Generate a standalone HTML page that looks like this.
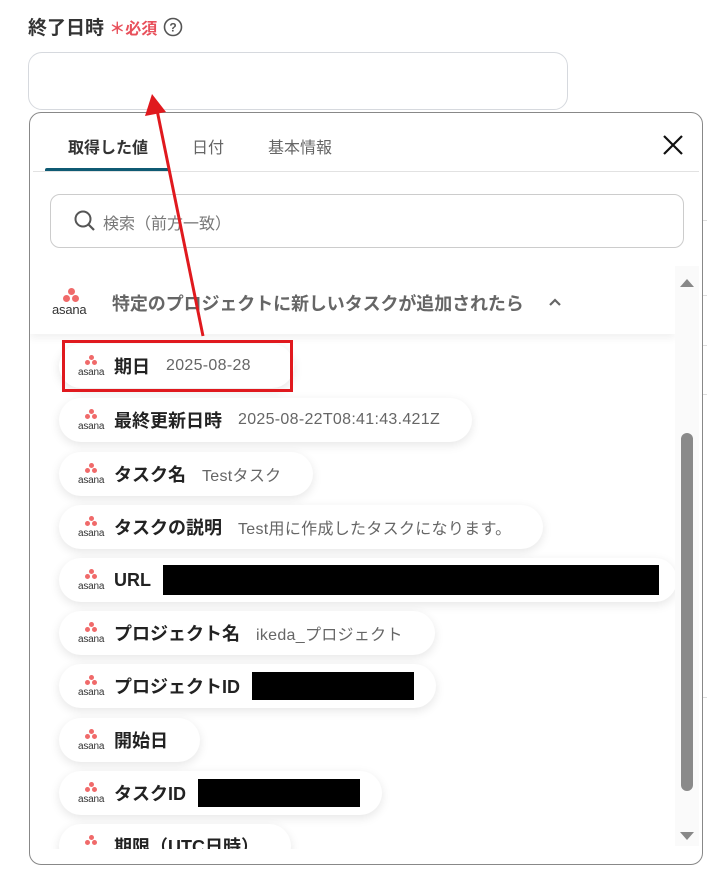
<!DOCTYPE html>
<html><head><meta charset="utf-8"><style>
*{box-sizing:border-box;margin:0;padding:0}
body{width:707px;height:870px;background:#fff;position:relative;overflow:hidden;font-family:"Liberation Sans","Noto Sans CJK JP",sans-serif;color:#222}
.abs{position:absolute}
.label{left:28px;top:13px;font-size:19px;font-weight:bold;color:#333}
.req{color:#e8505b;font-size:16px;font-weight:bold}
.inp{left:28px;top:52px;width:540px;height:58px;border:1px solid #d6d9de;border-radius:14px}
.bgline{left:690px;width:17px;height:1px;background:#ddd}
.panel{left:29px;top:112px;width:674px;height:753px;border:1px solid #888;border-radius:12px;background:#fff;overflow:hidden}
.tab{top:21px;font-size:16px;font-weight:bold;color:#333}
.search{left:20px;top:81px;width:634px;height:54px;border:1px solid #ccc;border-radius:10px}
.pill{left:29px;height:44px;border-radius:22px;background:#fff;box-shadow:0 3px 10px rgba(0,0,0,.10);display:flex;align-items:center;padding-left:19px;padding-right:32px;white-space:nowrap}
.pill b{font-size:18px;color:#222;margin-left:8px}
.pill span{font-size:16px;color:#666;margin-left:16px;letter-spacing:.3px}
.blk{background:#000;display:inline-block;height:30px;margin-left:12px}
.ic{width:28px;height:22px;position:relative;flex:none}
.ic i{position:absolute;width:5px;height:5px;border-radius:50%;background:#f06a6a}
.ic em{position:absolute;left:0;top:12px;font-style:normal;font-size:10px;color:#333;letter-spacing:-.2px}
</style></head><body>
<div class="abs label">終了日時 <span class="req">＊必須</span> <svg width="20" height="20" viewBox="0 0 20 20" style="vertical-align:-3px"><circle cx="10" cy="10" r="8.5" fill="none" stroke="#555" stroke-width="1.6"/><text x="10" y="14.5" text-anchor="middle" font-size="12" fill="#555" font-family="Liberation Sans">?</text></svg></div>
<div class="abs inp"></div>
<div class="abs bgline" style="top:220px"></div>
<div class="abs bgline" style="top:295px"></div>
<div class="abs bgline" style="top:345px"></div>
<div class="abs bgline" style="top:394px"></div>
<div class="abs bgline" style="top:697px"></div>
<div class="abs panel">
  <div class="abs tab" style="left:38px">取得した値</div>
  <div class="abs tab" style="left:162px;font-weight:normal;color:#666">日付</div>
  <div class="abs tab" style="left:238px;font-weight:normal;color:#666">基本情報</div>
  <div class="abs" style="left:15px;top:55px;width:124px;height:4px;background:#0f5a73;border-radius:2px 2px 0 0"></div>
  <div class="abs" style="left:3px;top:58px;width:666px;height:1px;background:#e2e2e2"></div>
  <svg class="abs" style="left:632px;top:21px" width="22" height="22" viewBox="0 0 22 22"><path d="M2 2L20 20M20 2L2 20" stroke="#111" stroke-width="2.2"/></svg>
  <div class="abs search"><svg class="abs" style="left:22px;top:14px" width="24" height="24" viewBox="0 0 24 24"><circle cx="10" cy="10" r="7.5" fill="none" stroke="#555" stroke-width="2"/><path d="M15.5 15.5L21 21" stroke="#555" stroke-width="2.2"/></svg><div class="abs" style="left:52px;top:15px;font-size:16px;color:#777">検索（前方一致）</div></div>
  <div class="abs" style="left:0;top:153px;width:645px;height:583px;overflow:hidden">
    <div class="abs pill" style="top:78px;width:235px;left:29px"><div class="ic"><i style="left:11px;top:0"></i><i style="left:7px;top:5px"></i><i style="left:14px;top:5px"></i><em>asana</em></div><b>期日</b><span>2025-08-28</span></div>
    <div class="abs pill" style="top:132px"><div class="ic"><i style="left:11px;top:0"></i><i style="left:7px;top:5px"></i><i style="left:14px;top:5px"></i><em>asana</em></div><b>最終更新日時</b><span>2025-08-22T08:41:43.421Z</span></div>
    <div class="abs pill" style="top:186px"><div class="ic"><i style="left:11px;top:0"></i><i style="left:7px;top:5px"></i><i style="left:14px;top:5px"></i><em>asana</em></div><b>タスク名</b><span>Testタスク</span></div>
    <div class="abs pill" style="top:239px"><div class="ic"><i style="left:11px;top:0"></i><i style="left:7px;top:5px"></i><i style="left:14px;top:5px"></i><em>asana</em></div><b>タスクの説明</b><span>Test用に作成したタスクになります。</span></div>
    <div class="abs pill" style="top:292px;width:618px;padding-right:0"><div class="ic"><i style="left:11px;top:0"></i><i style="left:7px;top:5px"></i><i style="left:14px;top:5px"></i><em>asana</em></div><b>URL</b><i class="blk" style="width:496px"></i></div>
    <div class="abs pill" style="top:345px"><div class="ic"><i style="left:11px;top:0"></i><i style="left:7px;top:5px"></i><i style="left:14px;top:5px"></i><em>asana</em></div><b>プロジェクト名</b><span>ikeda_プロジェクト</span></div>
    <div class="abs pill" style="top:398px;padding-right:22px"><div class="ic"><i style="left:11px;top:0"></i><i style="left:7px;top:5px"></i><i style="left:14px;top:5px"></i><em>asana</em></div><b>プロジェクトID</b><i class="blk" style="width:162px;height:28px"></i></div>
    <div class="abs pill" style="top:452px"><div class="ic"><i style="left:11px;top:0"></i><i style="left:7px;top:5px"></i><i style="left:14px;top:5px"></i><em>asana</em></div><b>開始日</b></div>
    <div class="abs pill" style="top:505px;padding-right:22px"><div class="ic"><i style="left:11px;top:0"></i><i style="left:7px;top:5px"></i><i style="left:14px;top:5px"></i><em>asana</em></div><b>タスクID</b><i class="blk" style="width:162px;height:28px"></i></div>
    <div class="abs pill" style="top:558px"><div class="ic"><i style="left:11px;top:0"></i><i style="left:7px;top:5px"></i><i style="left:14px;top:5px"></i><em>asana</em></div><b>期限（UTC日時）</b></div>
    <div class="abs" style="left:0;top:0;width:645px;height:68px;background:#fff;box-shadow:0 4px 8px rgba(0,0,0,.06)"></div>
    <div class="abs ic" style="left:22px;top:22px;width:44px;height:30px"><i style="left:16px;top:0;width:7px;height:7px"></i><i style="left:11px;top:7px;width:7px;height:7px"></i><i style="left:20px;top:7px;width:7px;height:7px"></i><em style="top:14px;font-size:13px">asana</em></div>
    <div class="abs" style="left:82px;top:24px;font-size:18px;font-weight:bold;color:#666;letter-spacing:-.1px">特定のプロジェクトに新しいタスクが追加されたら</div>
    <svg class="abs" style="left:518px;top:31px" width="14" height="10" viewBox="0 0 14 10"><path d="M2 8L7 3L12 8" fill="none" stroke="#666" stroke-width="2.2"/></svg>
  </div>
  <div class="abs" style="left:645px;top:153px;width:24px;height:580px;background:#fafafa"></div>
  <svg class="abs" style="left:649px;top:163px" width="16" height="12"><path d="M1 11L8 3L15 11Z" fill="#888"/></svg>
  <div class="abs" style="left:651px;top:320px;width:12px;height:358px;border-radius:6px;background:#8a8a8a"></div>
  <svg class="abs" style="left:649px;top:718px" width="16" height="12"><path d="M1 1L8 9L15 1Z" fill="#888"/></svg>
</div>
<div class="abs" style="left:62px;top:340px;width:231px;height:52px;border:3px solid #e0191e"></div>
<svg class="abs" style="left:0;top:0" width="707" height="870"><path d="M203 336L157 110" stroke="#e0191e" stroke-width="3"/><path d="M152 94L145 116L166 112Z" fill="#e0191e"/></svg>
</body></html>
